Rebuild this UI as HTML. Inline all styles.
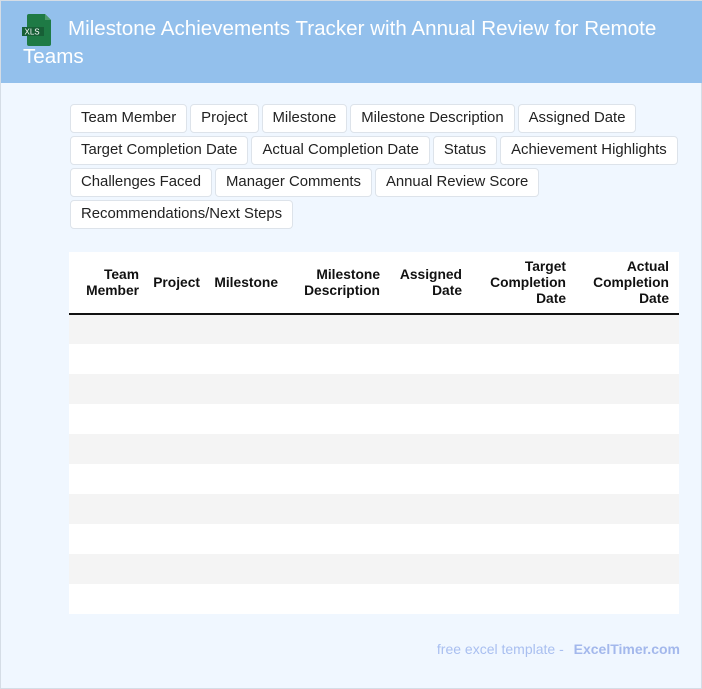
<!DOCTYPE html>
<html><head><meta charset="utf-8"><style>
*{box-sizing:border-box;margin:0;padding:0}
body{width:702px;height:689px;background:#f0f7ff;font-family:"Liberation Sans",sans-serif;position:relative;overflow:hidden;border:1px solid #d5dde6}
.hdr{position:absolute;left:0;top:0;width:702px;height:82px;background:#93c0ec}
.hdr h1{position:absolute;left:22px;top:14px;width:675px;font-weight:normal;color:#fff;font-size:20.6px;line-height:28px;text-indent:45px}
.icon{position:absolute;left:20px;top:12px}
.tags{position:absolute;left:69px;top:103px;width:615px}
.tag{display:inline-block;height:29px;line-height:27px;padding:0 10px;border:1px solid #dde3ea;border-radius:4px;background:#fff;font-size:14.9px;color:#222;margin:0 3px 3px 0;float:left}
table{position:absolute;left:68px;top:251px;width:610px;border-collapse:collapse;background:#fff;table-layout:fixed}
th{font-size:13.8px;font-weight:bold;text-align:right;vertical-align:middle;padding:0 10px 0 0;line-height:16px;height:62px;border-bottom:2px solid #111;color:#111}
td{height:30px}
tr.g td{background:#f4f4f4}
.ft{position:absolute;right:21px;top:640px;font-size:14px;color:#a9bff0}
.ft b{margin-left:6px;color:#a3b8ec}
</style></head><body>
<div class="hdr">
<svg class="icon" width="32" height="34" viewBox="0 0 32 34"><path d="M8 1h16l6 6v24a2 2 0 0 1-2 2H8a2 2 0 0 1-2-2V3a2 2 0 0 1 2-2z" fill="#1e7a45"/><path d="M24 1v6h6z" fill="#4c9a6c"/><rect x="1" y="14" width="22" height="9" fill="#175f36"/><text x="3.5" y="21.5" font-size="8" fill="#fff" font-family="Liberation Sans">XLS</text></svg>
<h1>Milestone Achievements Tracker with Annual Review for Remote Teams</h1>
</div>
<div class="tags">
<span class="tag">Team Member</span><span class="tag">Project</span><span class="tag">Milestone</span><span class="tag">Milestone Description</span><span class="tag">Assigned Date</span>
<span class="tag">Target Completion Date</span><span class="tag">Actual Completion Date</span><span class="tag">Status</span><span class="tag">Achievement Highlights</span>
<span class="tag">Challenges Faced</span><span class="tag">Manager Comments</span><span class="tag">Annual Review Score</span>
<span class="tag">Recommendations/Next Steps</span>
</div>
<table>
<colgroup><col style="width:80px"><col style="width:61px"><col style="width:78px"><col style="width:102px"><col style="width:82px"><col style="width:104px"><col style="width:103px"></colgroup>
<tr><th>Team<br>Member</th><th>Project</th><th>Milestone</th><th>Milestone<br>Description</th><th>Assigned<br>Date</th><th>Target<br>Completion<br>Date</th><th>Actual<br>Completion<br>Date</th></tr>
<tr class="g"><td colspan="7"></td></tr><tr><td colspan="7"></td></tr>
<tr class="g"><td colspan="7"></td></tr><tr><td colspan="7"></td></tr>
<tr class="g"><td colspan="7"></td></tr><tr><td colspan="7"></td></tr>
<tr class="g"><td colspan="7"></td></tr><tr><td colspan="7"></td></tr>
<tr class="g"><td colspan="7"></td></tr><tr><td colspan="7"></td></tr>
</table>
<div class="ft">free excel template - <b>ExcelTimer.com</b></div>
</body></html>
